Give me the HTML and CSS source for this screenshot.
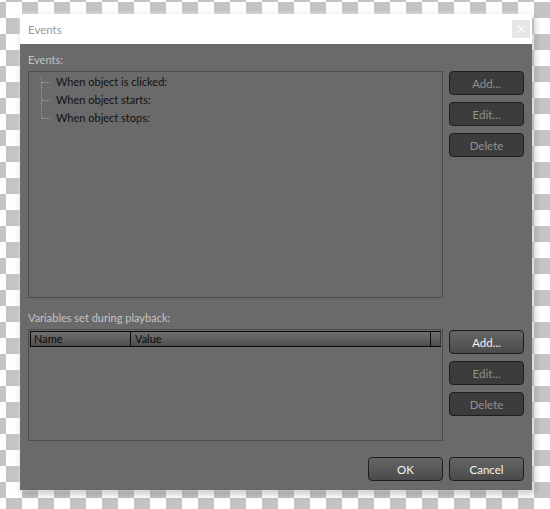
FILE: index.html
```html
<!DOCTYPE html>
<html>
<head>
<meta charset="utf-8">
<link rel="stylesheet" href="styles.css">
</head>
<body>
<div class="dialog">
  <div class="titlebar">
    <span class="title">Events</span>
    <span class="close">×</span>
  </div>
  <div class="content">
    <div class="label">Events:</div>
    <div class="row">
      <div class="box events-box">
        <ul class="tree">
          <li>When object is clicked:</li>
          <li>When object starts:</li>
          <li>When object stops:</li>
        </ul>
      </div>
      <div class="btncol">
        <button class="btn disabled">Add...</button>
        <button class="btn disabled">Edit...</button>
        <button class="btn disabled">Delete</button>
      </div>
    </div>
    <div class="label label2">Variables set during playback:</div>
    <div class="row">
      <div class="box vars-box">
        <div class="header">
          <div class="hcell name">Name</div>
          <div class="hcell value">Value</div>
          <div class="hcell stub"></div>
        </div>
      </div>
      <div class="btncol btncol2">
        <button class="btn">Add...</button>
        <button class="btn disabled">Edit...</button>
        <button class="btn disabled">Delete</button>
      </div>
    </div>
    <div class="footer">
      <button class="btn">OK</button>
      <button class="btn">Cancel</button>
    </div>
  </div>
</div>
</body>
</html>
```
FILE: styles.css
```css
html, body {
  margin: 0;
  padding: 0;
}
body {
  width: 550px;
  height: 509px;
  overflow: hidden;
  background-color: #ffffff;
  background-image: repeating-conic-gradient(#c4c4c4 0 25%, #ffffff 0 50%);
  background-size: 32px 32px;
  background-position: 6px 2px;
  font-family: "Segoe UI", Lato, "Noto Sans", sans-serif;
  font-size: 11px;
  padding-top: 14px;
  padding-left: 20px;
  box-sizing: border-box;
}
.dialog {
  width: 512px;
  height: 476px;
  background: #6a6a6a;
  box-shadow: 0 0 5px rgba(255,255,255,0.8), 2px 3px 7px rgba(0,0,0,0.3);
  display: flex;
  flex-direction: column;
}
.titlebar {
  height: 30px;
  background: #ffffff;
  display: flex;
  align-items: center;
  justify-content: space-between;
  padding-left: 8px;
  padding-right: 2px;
}
.title {
  color: #999999;
  font-size: 11.5px;
}
.close {
  width: 18px;
  height: 18px;
  background: #e6e6e6;
  color: #fafafa;
  font-size: 13px;
  line-height: 17px;
  text-align: center;
  font-family: "DejaVu Sans", sans-serif;
}
.content {
  padding: 8px 8px 9px 8px;
  display: flex;
  flex-direction: column;
}
.label {
  height: 16px;
  line-height: 16px;
  color: #c4c4c4;
  margin-bottom: 3px;
}
.label2 {
  margin-top: 12px;
}
.row {
  display: flex;
  gap: 6px;
  align-items: flex-start;
}
.box {
  width: 415px;
  box-sizing: border-box;
  border: 1px solid #4c4c4c;
  padding: 1px;
}
.events-box {
  height: 227px;
}
.vars-box {
  height: 112px;
}
.tree {
  list-style: none;
  margin: 0 0 0 11px;
  padding: 0;
  position: relative;
}
.tree::before {
  content: "";
  position: absolute;
  left: 0;
  top: 4px;
  height: 41px;
  border-left: 1px dotted #a0a0a0;
}
.tree li {
  height: 18px;
  line-height: 18px;
  padding-left: 15px;
  color: #111111;
  position: relative;
}
.tree li::before {
  content: "";
  position: absolute;
  left: 1px;
  top: 9px;
  width: 8px;
  border-top: 1px dotted #a0a0a0;
}
.header {
  display: flex;
  height: 16px;
  box-sizing: border-box;
  border: 1px solid #0a0a0a;
  border-right: none;
  background: linear-gradient(#707070, #4e4e4e);
}
.hcell {
  box-sizing: border-box;
  border-right: 1px solid #0a0a0a;
  height: 14px;
  line-height: 14px;
  color: #0a0a0a;
  padding-left: 3px;
}
.name { width: 100px; }
.value { width: 300px; padding-left: 4px; }
.stub { flex: 1; border-right: 1px solid #3a3a3a; }
.btncol {
  display: flex;
  flex-direction: column;
  gap: 7px;
}
.btncol2 {
  margin-top: 1px;
}
.btn {
  width: 75px;
  height: 24px;
  box-sizing: border-box;
  border: 1px solid #1e1e1e;
  border-radius: 4px;
  background: linear-gradient(#666666, #4a4a4a);
  color: #f4f4f4;
  font-family: inherit;
  font-size: 11.5px;
  padding: 0;
  margin: 0;
}
.btn.disabled {
  background: #3c3c3c;
  color: #929292;
}
.footer {
  margin-top: 16px;
  display: flex;
  justify-content: flex-end;
  gap: 6px;
}
```
